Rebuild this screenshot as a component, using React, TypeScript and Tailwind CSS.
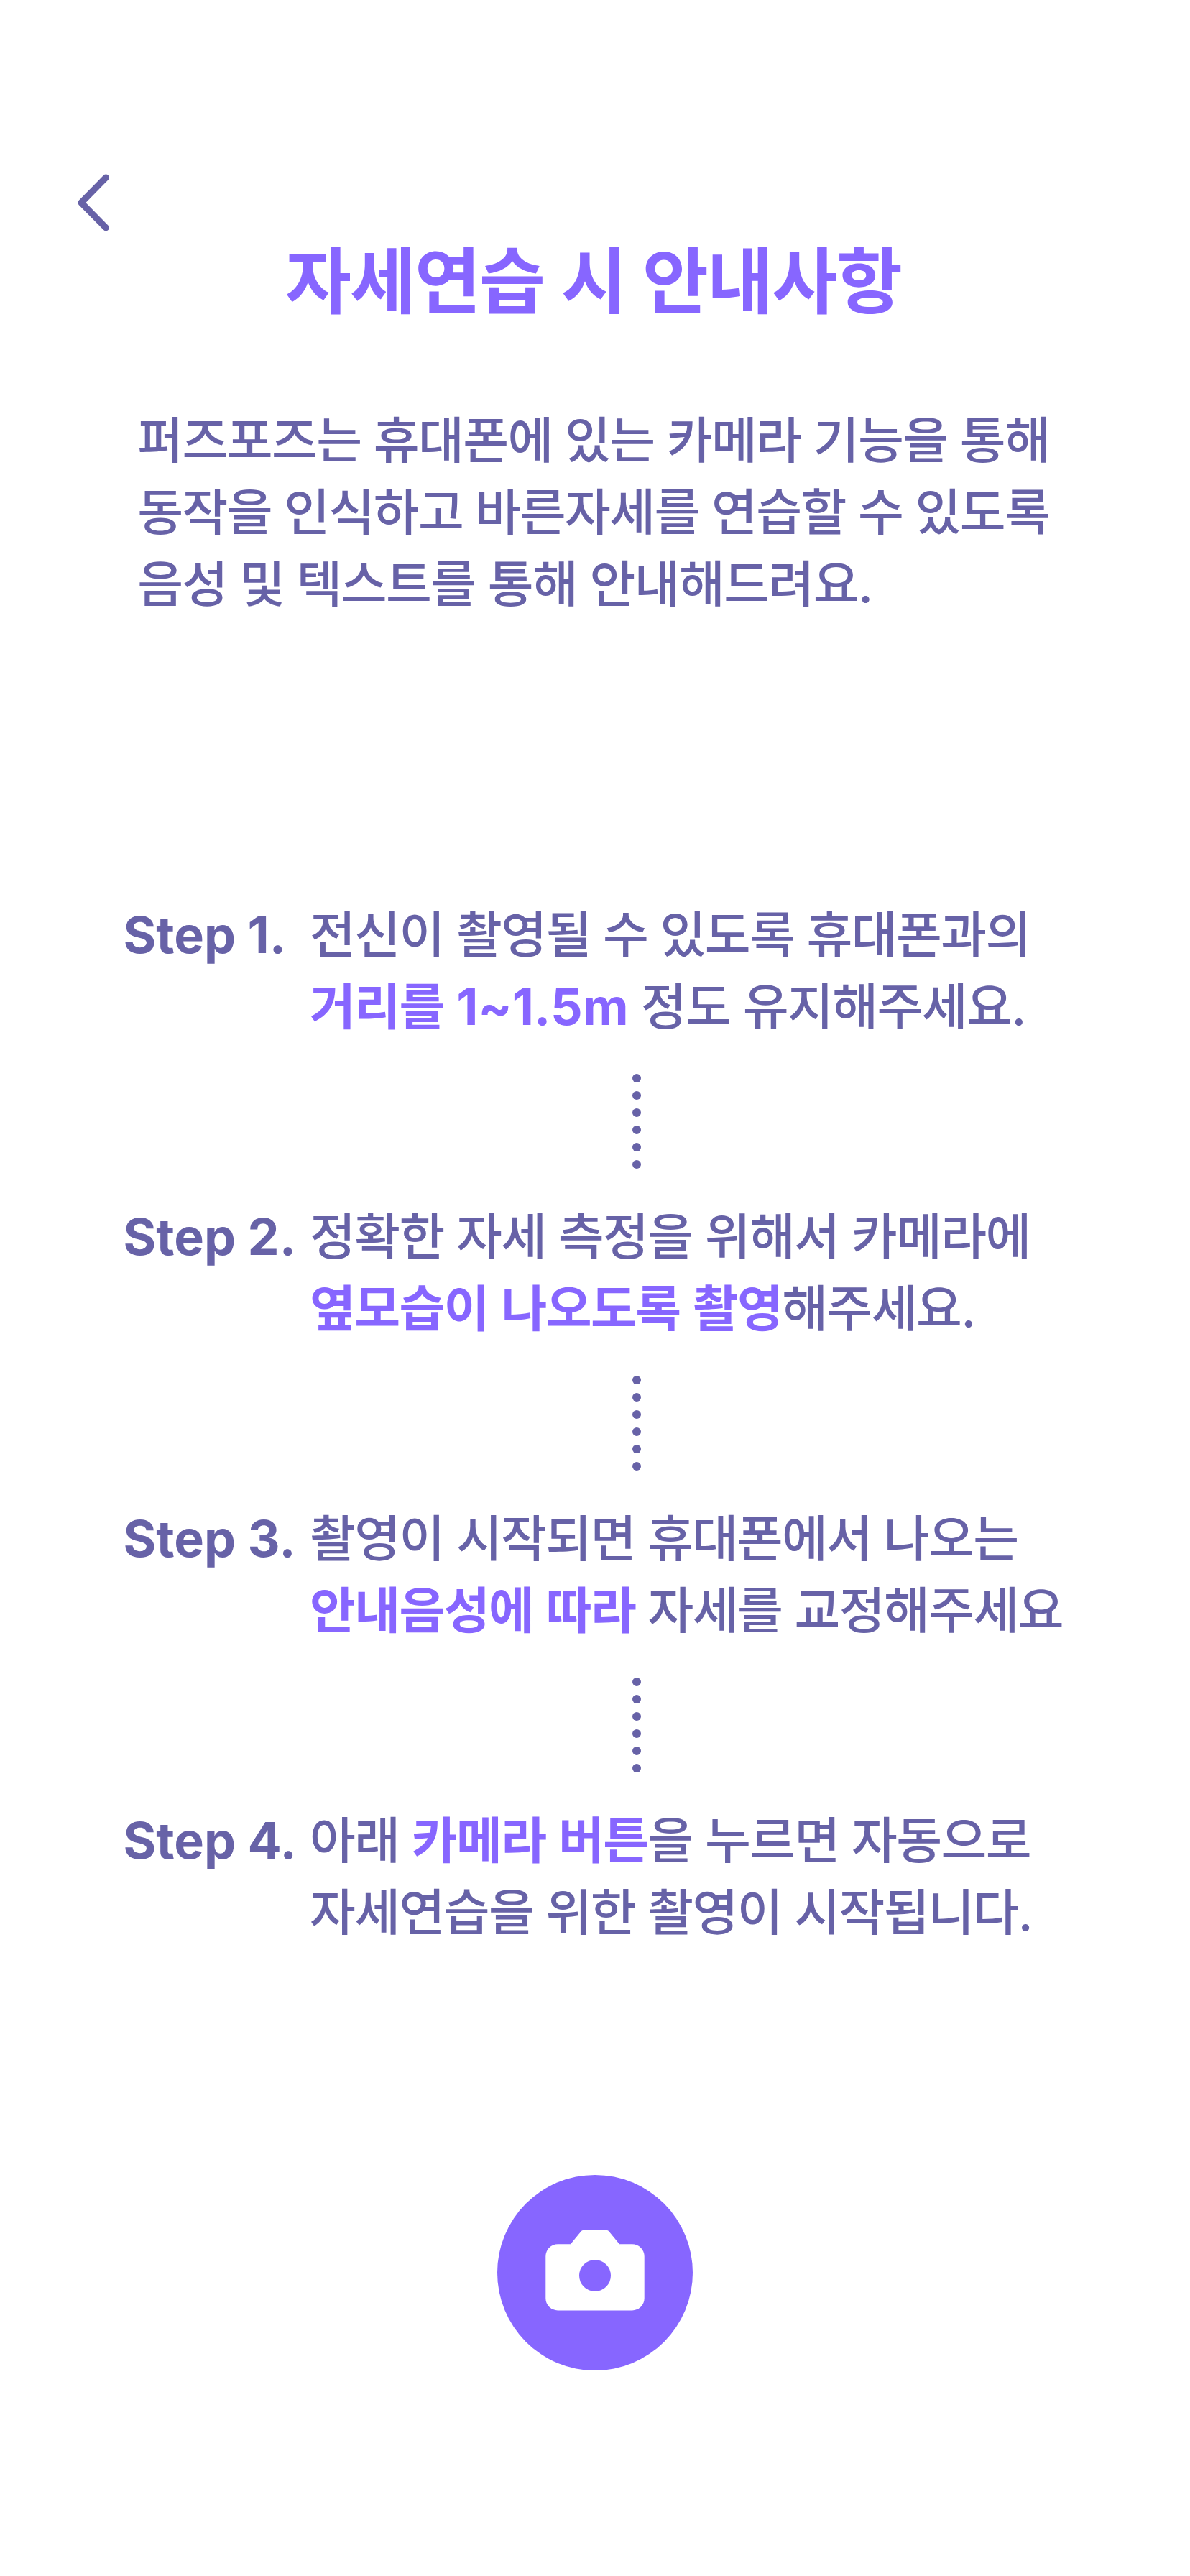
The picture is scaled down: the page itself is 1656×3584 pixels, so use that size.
import React from "react";

function Latin({ children }: { children: React.ReactNode }) {
  return <span className="font-[Inter,sans-serif] text-[70px] leading-none tracking-normal [word-spacing:0px]">{children}</span>;
}

function Strong({ children }: { children: React.ReactNode }) {
  return <span className="font-bold text-[#8766ff]">{children}</span>;
}

const copy = "whitespace-nowrap font-['Noto_Sans_CJK_KR',sans-serif] text-[69.4px] font-medium leading-[100px] tracking-[-1.59px] [word-spacing:3.25px]";

function Step({ n, children }: { n: number; children: React.ReactNode }) {
  return (
    <div className={"flex h-[200px] " + copy}>
      <div className="w-[259.6px] font-bold"><Latin>Step {n}.</Latin></div>
      <div>{children}</div>
    </div>
  );
}

function Dots() {
  return (
    <div className="ml-[708.6px] flex h-[220px] flex-col gap-3 pt-12">
      {[0, 1, 2, 3, 4, 5].map((i) => (
        <span key={i} className="size-3 rounded-full bg-[#6762a7]" />
      ))}
    </div>
  );
}

export default function App() {
  return (
    <main className="h-[3584px] w-[1656px] overflow-hidden bg-white text-[#6762a7]">
      <header className="h-[558px] pt-60">
        <svg className="ml-[106px] block overflow-visible" width="50" height="75" viewBox="0 0 50 75" fill="none" stroke="currentColor" strokeWidth="9" strokeLinecap="round" strokeLinejoin="round">
          <path d="M41.4 7 7 42l34.4 34.8" />
        </svg>
        <h1 className="ml-[397px] whitespace-nowrap font-['Noto_Sans_CJK_KR',sans-serif] text-[100px] font-bold leading-[140px] tracking-[-2.04px] text-[#8766ff] [word-spacing:3px]">자세연습 시 안내사항</h1>
      </header>
      <p className={"ml-[191.2px] h-[688px] " + copy}>
        퍼즈포즈는 휴대폰에 있는 카메라 기능을 통해<br />동작을 인식하고 바른자세를 연습할 수 있도록<br />음성 및 텍스트를 통해 안내해드려요<Latin>.</Latin>
      </p>
      <section className="ml-[171.4px]">
        <Step n={1}>전신이 촬영될 수 있도록 휴대폰과의<br /><Strong>거리를 <Latin>1~1.5m</Latin></Strong> 정도 유지해주세요<Latin>.</Latin></Step>
        <Dots />
        <Step n={2}>정확한 자세 측정을 위해서 카메라에<br /><Strong>옆모습이 나오도록 촬영</Strong>해주세요<Latin>.</Latin></Step>
        <Dots />
        <Step n={3}>촬영이 시작되면 휴대폰에서 나오는<br /><Strong>안내음성에 따라</Strong> 자세를 교정해주세요</Step>
        <Dots />
        <Step n={4}>아래 <Strong>카메라 버튼</Strong>을 누르면 자동으로<br />자세연습을 위한 촬영이 시작됩니다<Latin>.</Latin></Step>
      </section>
      <button className="mx-auto mt-[320px] flex size-[272px] items-start justify-center rounded-full bg-[#8766ff] pt-[77px]">
        <svg width="138" height="112" viewBox="0 0 138 112" fill="#fff">
          <path d="M17.3 19.2H35L49.6 1.4Q50.8 0 52.6 0H85.4Q87.2 0 88.4 1.4L103 19.2H120.7A17 17 0 0 1 137.7 36.2V94.4A17 17 0 0 1 120.7 111.4H17.3A17 17 0 0 1 .3 94.4V36.2A17 17 0 0 1 17.3 19.2Z" />
          <circle cx="69" cy="63" r="22" fill="#8766ff" />
        </svg>
      </button>
    </main>
  );
}
